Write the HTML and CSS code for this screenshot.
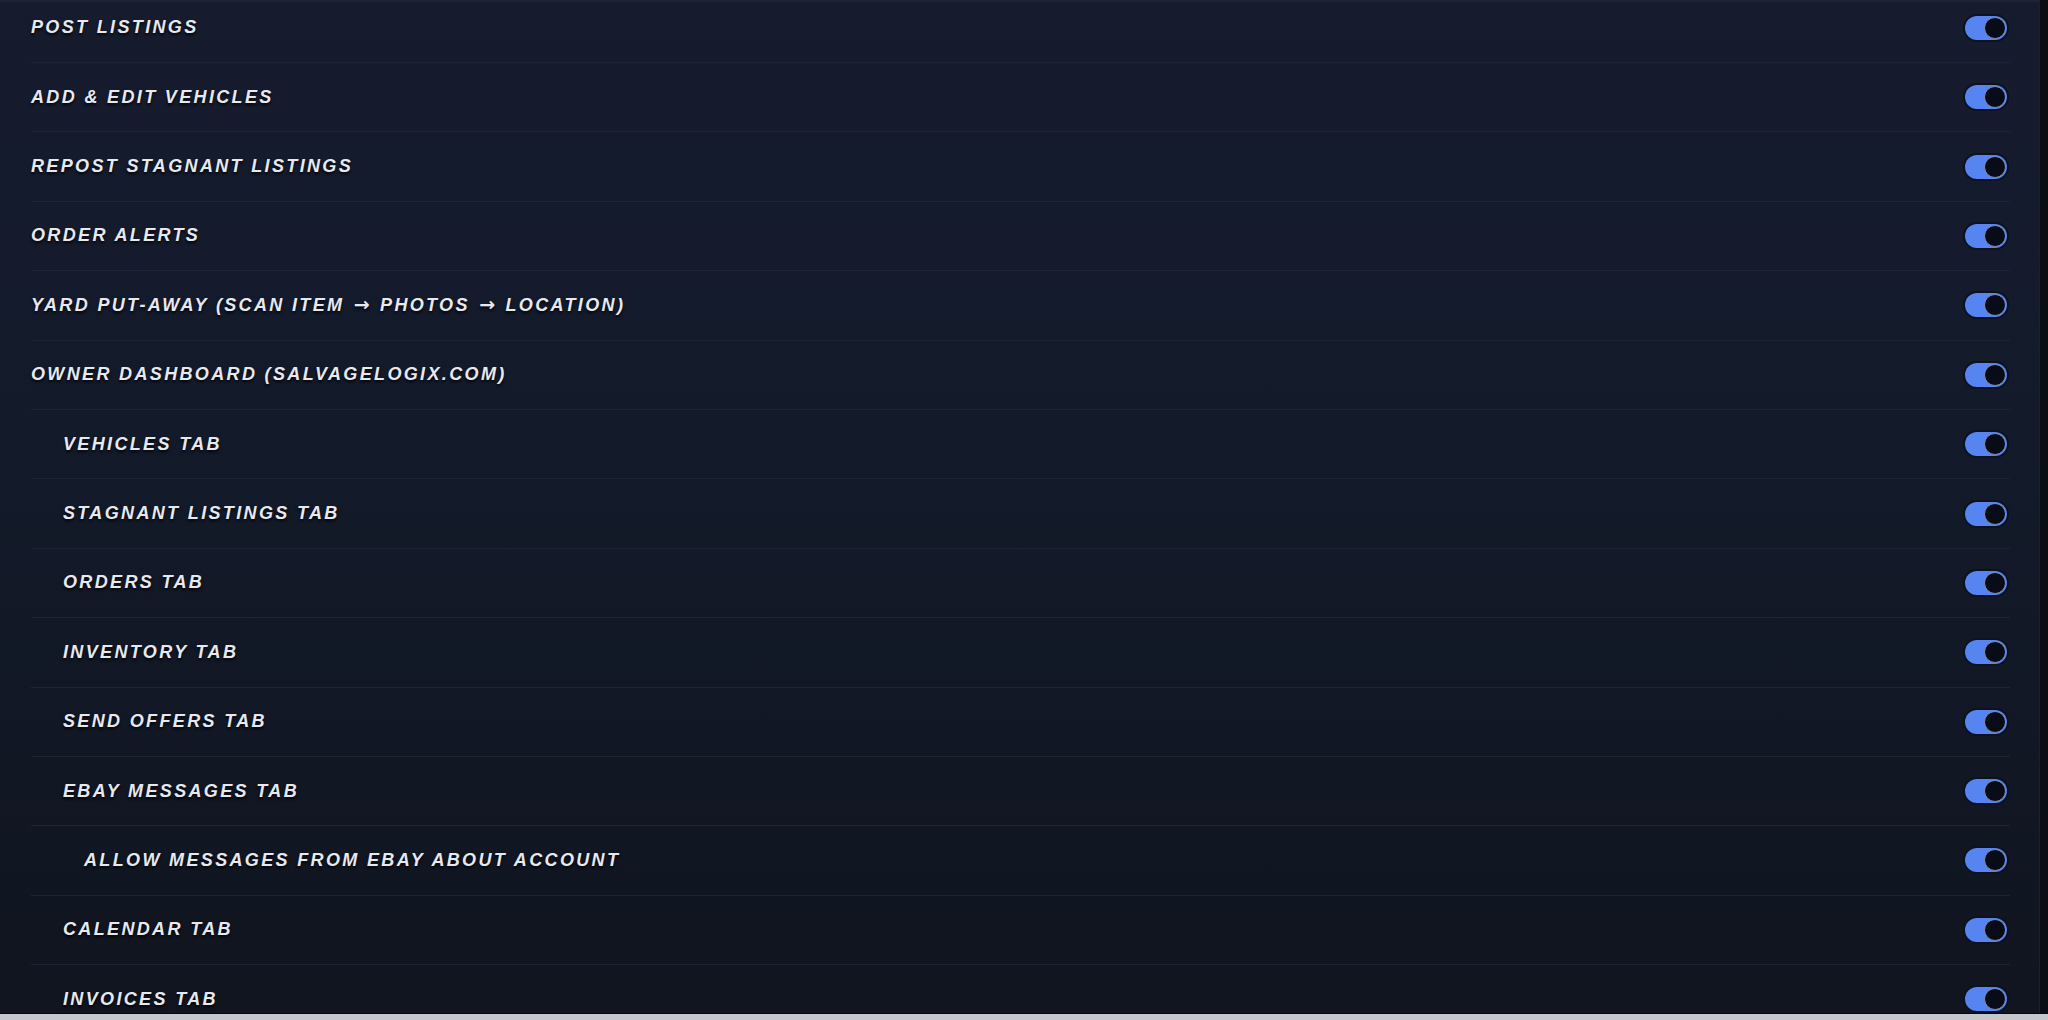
FILE: index.html
```html
<!DOCTYPE html>
<html>
<head>
<meta charset="utf-8">
<link rel="stylesheet" href="styles.css">
</head>
<body>
<div class="screen">
  <div class="panel">
    <div class="list">
      <div class="row"><span class="label">Post Listings</span><span class="toggle"><span class="knob"></span></span></div>
      <div class="row"><span class="label">Add &amp; Edit Vehicles</span><span class="toggle"><span class="knob"></span></span></div>
      <div class="row"><span class="label">Repost Stagnant Listings</span><span class="toggle"><span class="knob"></span></span></div>
      <div class="row"><span class="label">Order Alerts</span><span class="toggle"><span class="knob"></span></span></div>
      <div class="row"><span class="label">Yard Put-Away (Scan Item <span class="arrow">→</span> Photos <span class="arrow">→</span> Location)</span><span class="toggle"><span class="knob"></span></span></div>
      <div class="row"><span class="label">Owner Dashboard (SalvageLogix.com)</span><span class="toggle"><span class="knob"></span></span></div>
      <div class="row sub"><span class="label">Vehicles Tab</span><span class="toggle"><span class="knob"></span></span></div>
      <div class="row sub"><span class="label">Stagnant Listings Tab</span><span class="toggle"><span class="knob"></span></span></div>
      <div class="row sub"><span class="label">Orders Tab</span><span class="toggle"><span class="knob"></span></span></div>
      <div class="row sub"><span class="label">Inventory Tab</span><span class="toggle"><span class="knob"></span></span></div>
      <div class="row sub"><span class="label">Send Offers Tab</span><span class="toggle"><span class="knob"></span></span></div>
      <div class="row sub"><span class="label">eBay Messages Tab</span><span class="toggle"><span class="knob"></span></span></div>
      <div class="row subsub"><span class="label">Allow messages from eBay about account</span><span class="toggle"><span class="knob"></span></span></div>
      <div class="row sub"><span class="label">Calendar Tab</span><span class="toggle"><span class="knob"></span></span></div>
      <div class="row sub"><span class="label">Invoices Tab</span><span class="toggle"><span class="knob"></span></span></div>
    </div>
  </div>
  <div class="edge"></div>
</div>
<div class="bottom"></div>
</body>
</html>
```

FILE: styles.css
```css
html, body {
  margin: 0;
  padding: 0;
  background: #0a0d15;
  overflow: hidden;
}
.screen {
  display: flex;
  height: 1013px;
  border-bottom: 1px solid #05070b;
}
.panel {
  width: 2039px;
  height: 1013px;
  overflow: hidden;
  background: linear-gradient(180deg, #161c2e 0%, #131a2a 40%, #10151f 100%);
  box-shadow: inset 0 2px 0 #1c2337;
  padding: 0 29px 0 31px;
  box-sizing: border-box;
}
.edge {
  flex: 1;
  background: #0a0d14;
  border-left: 1px solid #1a2030;
}
.bottom {
  height: 6px;
  background: #c4c7cc;
}
.list {
  display: flex;
  flex-direction: column;
  margin-top: -6.4px;
}
.row {
  height: 69.4px;
  box-sizing: border-box;
  border-bottom: 1px solid #1d2436;
  display: flex;
  align-items: center;
  justify-content: space-between;
}
.label {
  font-family: "Liberation Sans", Arial, sans-serif;
  font-weight: bold;
  font-style: italic;
  font-size: 18px;
  letter-spacing: 2.35px;
  text-transform: uppercase;
  color: #e6e9f0;
  text-shadow: 0 2px 3px rgba(0, 0, 0, 0.85);
}
.arrow {
  font-family: "DejaVu Sans", sans-serif;
  font-weight: bold;
  font-size: 19px;
  line-height: 0;
  letter-spacing: 0;
  margin: 0 3px 0 2px;
}
.row.sub .label {
  padding-left: 32px;
}
.row.subsub .label {
  padding-left: 53px;
}
.toggle {
  width: 42px;
  height: 24px;
  border-radius: 12px;
  background: #5685f2;
  box-shadow: 0 0 0 2px #0c1224;
  display: flex;
  align-items: center;
  justify-content: flex-end;
  padding: 0 1px;
  box-sizing: border-box;
  margin-right: 3px;
}
.knob {
  width: 22px;
  height: 22px;
  border-radius: 50%;
  background: #080b18;
  border: 1px solid #7d8cb3;
  box-sizing: border-box;
}
```
